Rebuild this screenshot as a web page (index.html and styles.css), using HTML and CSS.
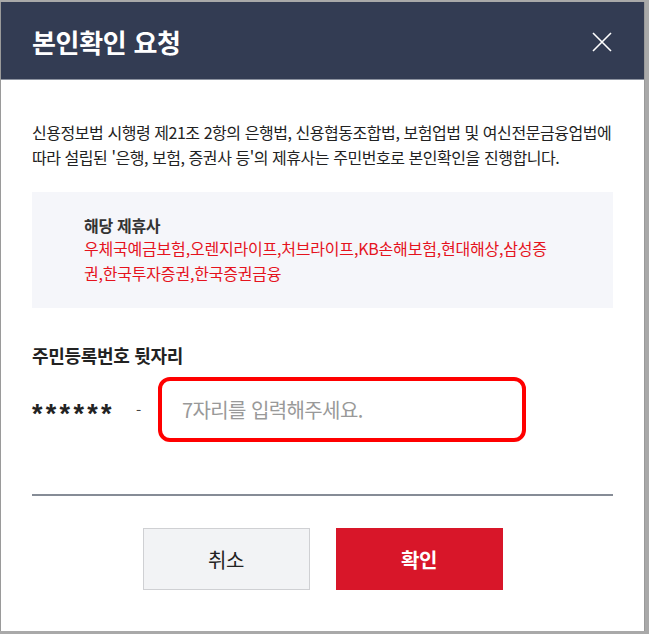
FILE: index.html
```html
<!DOCTYPE html>
<html lang="ko">
<head>
<meta charset="utf-8">
<title>본인확인 요청</title>
<link rel="stylesheet" href="styles.css">
</head>
<body>
<div class="modal">
  <div class="header">
    <h1 class="title">본인확인 요청</h1>
    <button class="close" aria-label="닫기">
      <svg width="20" height="20" viewBox="0 0 20 20"><path d="M1 1L19 19M19 1L1 19" stroke="#fff" stroke-width="1.6" fill="none"/></svg>
    </button>
  </div>
  <div class="body">
    <p class="desc">신용정보법 시행령 제21조 2항의 은행법, 신용협동조합법, 보험업법 및 여신전문금융업법에 따라 설립된 '은행, 보험, 증권사 등'의 제휴사는 주민번호로 본인확인을 진행합니다.</p>
    <div class="partners">
      <div class="partners-title">해당 제휴사</div>
      <div class="partners-list">우체국예금보험,오렌지라이프,처브라이프,KB손해보험,현대해상,삼성증권,한국투자증권,한국증권금융</div>
    </div>
    <div class="label">주민등록번호 뒷자리</div>
    <div class="row">
      <span class="mask">******</span>
      <span class="dash">-</span>
      <input class="input" type="password" placeholder="7자리를 입력해주세요.">
    </div>
    <div class="divider"></div>
    <div class="buttons">
      <button class="btn cancel">취소</button>
      <button class="btn ok">확인</button>
    </div>
  </div>
</div>
</body>
</html>
```

FILE: styles.css
```css
html, body {
  margin: 0;
  padding: 0;
}
body {
  background: #a9a9a9;
  width: 649px;
  height: 634px;
  overflow: hidden;
  font-family: "Noto Sans CJK KR", "Noto Sans", sans-serif;
}
.modal {
  margin-top: 2px;
  width: 643px;
  height: 629px;
  background: #fff;
  border-left: 1px solid #9a9a9a;
  border-right: 1px solid #9a9a9a;
  display: flex;
  flex-direction: column;
}
.header {
  height: 77px;
  background: #333c53;
  border-bottom: 1px solid #8d93a0;
  display: flex;
  align-items: center;
  justify-content: space-between;
  padding: 0 32px 0 31px;
}
.title {
  margin: 0;
  color: #fff;
  font-size: 26px;
  font-weight: 700;
  letter-spacing: -0.3px;
  line-height: 1;
  padding-top: 2px;
}
.close {
  background: none;
  border: 0;
  padding: 0;
  width: 20px;
  height: 20px;
  display: block;
  margin-top: 2px;
}
.close svg { display: block; }
.body {
  padding: 0 31px;
}
.desc {
  margin: 40px 0 0;
  font-size: 16px;
  line-height: 25px;
  color: #222;
  letter-spacing: -0.45px;
}
.partners {
  margin-top: 22px;
  background: #f5f6fa;
  padding: 22px 54px 22px 52px;
  height: 72px;
}
.partners-title {
  font-size: 16px;
  font-weight: 700;
  color: #333;
  line-height: 22px;
  letter-spacing: -0.3px;
}
.partners-list {
  font-size: 16px;
  color: #e5131d;
  line-height: 25px;
  letter-spacing: -0.2px;
}
.label {
  margin-top: 35px;
  font-size: 18px;
  font-weight: 700;
  color: #222;
  letter-spacing: -0.3px;
  line-height: 24px;
}
.row {
  margin-top: 10px;
  display: flex;
  align-items: center;
}
.mask {
  font-family: "Liberation Sans", "Noto Sans", sans-serif;
  font-size: 27px;
  font-weight: 700;
  color: #222;
  letter-spacing: 3.3px;
  width: 104px;
  line-height: 27px;
  padding-top: 10px;
}
.dash {
  color: #444;
  font-size: 15px;
  width: 22px;
}
.input {
  box-sizing: border-box;
  width: 368px;
  height: 65px;
  border: 4px solid #f00;
  border-radius: 12px;
  padding: 0 20px;
  font-family: inherit;
  font-size: 20px;
  letter-spacing: -0.6px;
  outline: none;
  background: #fff;
}
.input::placeholder {
  color: #999;
}
.divider {
  margin-top: 52px;
  height: 2px;
  background: #868c96;
}
.buttons {
  margin-top: 32px;
  display: flex;
  justify-content: center;
  gap: 26px;
}
.btn {
  width: 167px;
  height: 62px;
  font-family: inherit;
  font-size: 20px;
  border: 1px solid #cfd0d3;
  cursor: pointer;
  letter-spacing: -0.3px;
}
.cancel {
  background: #f2f3f5;
  color: #222;
}
.ok {
  background: #d81629;
  border-color: #d81629;
  color: #fff;
  font-weight: 700;
}
```
